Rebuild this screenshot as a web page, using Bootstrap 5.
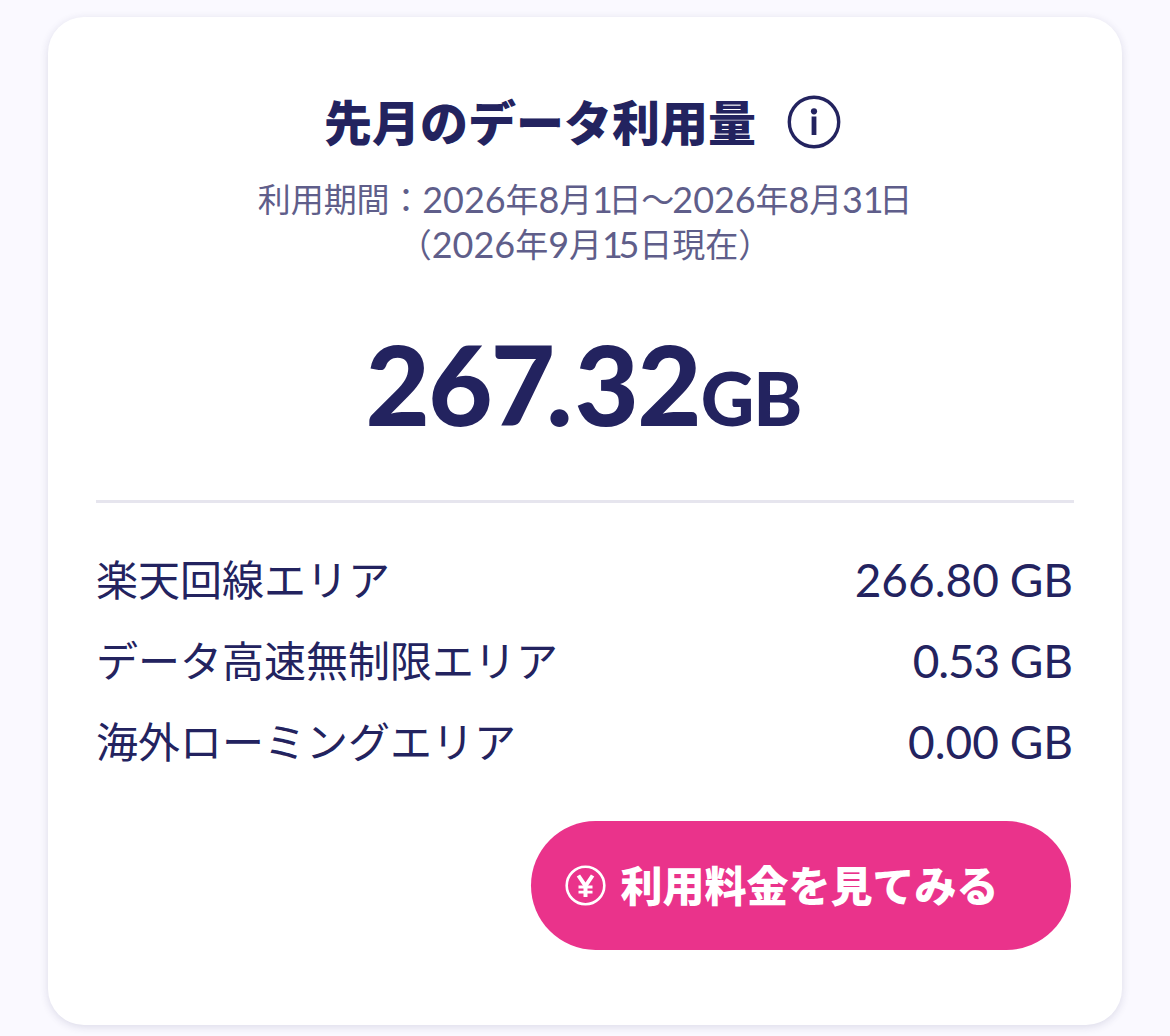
<!DOCTYPE html>
<html lang="ja">
<head>
<meta charset="utf-8">
<meta name="viewport" content="width=device-width, initial-scale=1">
<title>先月のデータ利用量</title>
<link href="https://cdn.jsdelivr.net/npm/bootstrap@5.3.0/dist/css/bootstrap.min.css" rel="stylesheet">
<style>
  body { min-height: 100vh; padding: 17px 48px 11px; background: #faf9ff; color: #23235f; font-family: Lato, "Noto Sans CJK JP", sans-serif; }
  .usage-card { height: 1008px; padding: 69px 48px 0; border-radius: 36px; box-shadow: 0 2px 8px rgba(35, 35, 95, .14); --bs-card-color: #23235f; }
  .usage-title { height: 72px; gap: 31px; padding-right: 5px; }
  .usage-title h1 { font: 800 48px/72px "Noto Sans CJK JP", sans-serif; padding-bottom: 5px; }
  .period { margin-top: 18px; font: 400 33px/45px "Noto Sans CJK JP", sans-serif; color: #5f5e8a; white-space: nowrap; }
  .period .range { letter-spacing: -.1px; }
  .period b { font: 400 36px/1 Lato, sans-serif; vertical-align: -1px; }
  .period i { font-style: normal; letter-spacing: -4.5px; }
  .period .wave { letter-spacing: -2px; }
  .total { margin-top: 62px; height: 110px; line-height: 110px; font-weight: 900; font-size: 111px; letter-spacing: -1.8px; white-space: nowrap; padding-right: 3px; }
  .total .point { letter-spacing: 2px; }
  .total .before-point { letter-spacing: -9px; }
  .total .unit { font-size: 74px; letter-spacing: -1px; padding-left: 1px; }
  .split-line { margin-top: 62px; height: 3px; background: #e6e5ee; }
  .areas { margin-top: 36px; }
  .areas li { height: 81px; }
  .area-name { font: 400 42px/77px "Noto Sans CJK JP", sans-serif; }
  .area-value { font: 400 46px/81px Lato, sans-serif; padding-right: 1px; word-spacing: -1px; }
  .area-value .tight { letter-spacing: -1.2px; }
  .fee-btn { margin: 39px 3px 0 0; width: 540px; height: 129px; padding: 0 0 0 33.5px; gap: 16px; border: 0; background: #ea338b; color: #fff; font: 800 42px/1 "Noto Sans CJK JP", sans-serif; }
  .fee-btn:hover { background: #d92a7d; color: #fff; }
  .fee-btn span { padding-bottom: 3px; margin-left: -1px; }
</style>
</head>
<body>
<main class="card border-0 usage-card">
  <div class="usage-title d-flex justify-content-center align-items-center">
    <h1 class="m-0">先月のデータ利用量</h1>
    <svg width="54" height="54" viewBox="0 0 54 54" fill="none" role="img" aria-label="情報">
      <circle cx="27" cy="27" r="24.7" stroke="#23235f" stroke-width="3.4"/>
      <circle cx="27" cy="16.3" r="3.1" fill="#23235f"/>
      <path d="M27 21.5v18.5" stroke="#23235f" stroke-width="4.8"/>
    </svg>
  </div>
  <div class="period text-center">
    <div class="range">利用期間：<b>2026</b>年<b>8</b>月<b><i>1</i></b>日<span class="wave">～</span><b>2026</b>年<b>8</b>月<b>3<i>1</i></b>日</div>
    <div>（<b>2026</b>年<b>9</b>月<b><i>1</i>5</b>日現在）</div>
  </div>
  <div class="total text-center">26<span class="before-point">7</span><span class="point">.</span>32<span class="unit">GB</span></div>
  <div class="split-line"></div>
  <ul class="areas list-unstyled mb-0">
    <li class="d-flex justify-content-between"><span class="area-name">楽天回線エリア</span><span class="area-value">266.80 GB</span></li>
    <li class="d-flex justify-content-between"><span class="area-name">データ高速無制限エリア</span><span class="area-value"><span class="tight">0.53</span> GB</span></li>
    <li class="d-flex justify-content-between"><span class="area-name">海外ローミングエリア</span><span class="area-value">0.00 GB</span></li>
  </ul>
  <button type="button" class="btn fee-btn rounded-pill d-flex align-items-center align-self-end">
    <svg width="41" height="41" viewBox="0 0 41 41" fill="none" stroke="#fff" aria-hidden="true">
      <circle cx="20.5" cy="20.5" r="18.8" stroke-width="2.6"/>
      <path d="M13.4 10.5l7.1 10.5 7.1-10.5M20.5 20v12" stroke-width="4"/>
      <path d="M13.5 22h14M13.5 27.2h14" stroke-width="2.8"/>
    </svg>
    <span>利用料金を見てみる</span>
  </button>
</main>
<script src="https://cdn.jsdelivr.net/npm/bootstrap@5.3.0/dist/js/bootstrap.bundle.min.js"></script>
</body>
</html>
